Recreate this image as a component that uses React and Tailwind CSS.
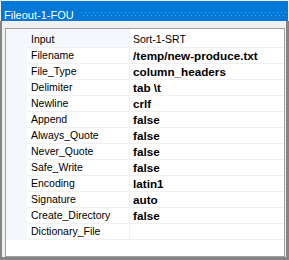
import React from "react";

const rows = [
  ["Input", "Sort-1-SRT", false],
  ["Filename", "/temp/new-produce.txt", true],
  ["File_Type", "column_headers", true],
  ["Delimiter", "tab \\t", true],
  ["Newline", "crlf", true],
  ["Append", "false", true],
  ["Always_Quote", "false", true],
  ["Never_Quote", "false", true],
  ["Safe_Write", "false", true],
  ["Encoding", "latin1", true],
  ["Signature", "auto", true],
  ["Create_Directory", "false", true],
  ["Dictionary_File", "", true],
];

function Dots() {
  return (
    <svg width="100%" height="5" className="block">
      <defs>
        <pattern id="grip" width="4" height="5" patternUnits="userSpaceOnUse">
          <rect x="0" y="0" width="1" height="1" fill="#4ea3e8" />
          <rect x="2" y="3" width="1" height="1" fill="#4ea3e8" />
        </pattern>
      </defs>
      <rect width="100%" height="5" fill="url(#grip)" />
    </svg>
  );
}

export default function App() {
  return (
    <div
      className="w-[289px] h-[260px] bg-[#f0f0f0] flex flex-col overflow-hidden"
      style={{ fontFamily: '"Liberation Sans", Arial, sans-serif' }}
    >
      <div className="mx-[1px] mt-[1px] h-[20px] bg-[#0078d7] flex items-start pl-[3px] pr-[2px]">
        <span className="text-white text-[11px] leading-[11px] pt-[9px] whitespace-nowrap">
          Fileout-1-FOU
        </span>
        <div className="flex-1 ml-[7px] mt-[11px]">
          <Dots />
        </div>
      </div>
      <div className="flex-1 flex flex-col border-l-2 border-r-[3px] border-b-[3px] border-[#858585] pt-[7px] pl-[3px] pr-[1px]">
        <div className="flex-1 border border-[#a0a0a0] bg-white flex flex-col">
          <div className="h-[3px] flex">
            <div className="w-[123px] bg-[#f4f7fc]" />
            <div className="w-[1px] bg-[#f0f0f0]" />
            <div className="flex-1" />
          </div>
          {rows.map(([name, value, bold], i) => (
            <div key={name} className="h-[16px] flex">
              <div className="w-[21px] bg-[#f4f7fc]" />
              <div
                className={
                  i === 0
                    ? "w-[102px] border-b border-[#f0f0f0] bg-[#f4f7fc] pl-[4px] text-[10.5px] leading-[15px] text-black whitespace-nowrap overflow-hidden"
                    : "w-[102px] border-b border-[#f0f0f0] pl-[4px] text-[10.5px] leading-[15px] text-black whitespace-nowrap overflow-hidden"
                }
              >
                {name}
              </div>
              <div className="w-[1px] bg-[#f0f0f0]" />
              <div
                className={
                  bold
                    ? "flex-1 border-b border-[#f0f0f0] pl-[3px] text-[11.7px] font-bold leading-[15px] text-black whitespace-nowrap overflow-hidden"
                    : "flex-1 border-b border-[#f0f0f0] pl-[3px] text-[10.5px] leading-[15px] text-black whitespace-nowrap overflow-hidden"
                }
              >
                {value}
              </div>
            </div>
          ))}
          <div className="flex-1" />
        </div>
      </div>
    </div>
  );
}
